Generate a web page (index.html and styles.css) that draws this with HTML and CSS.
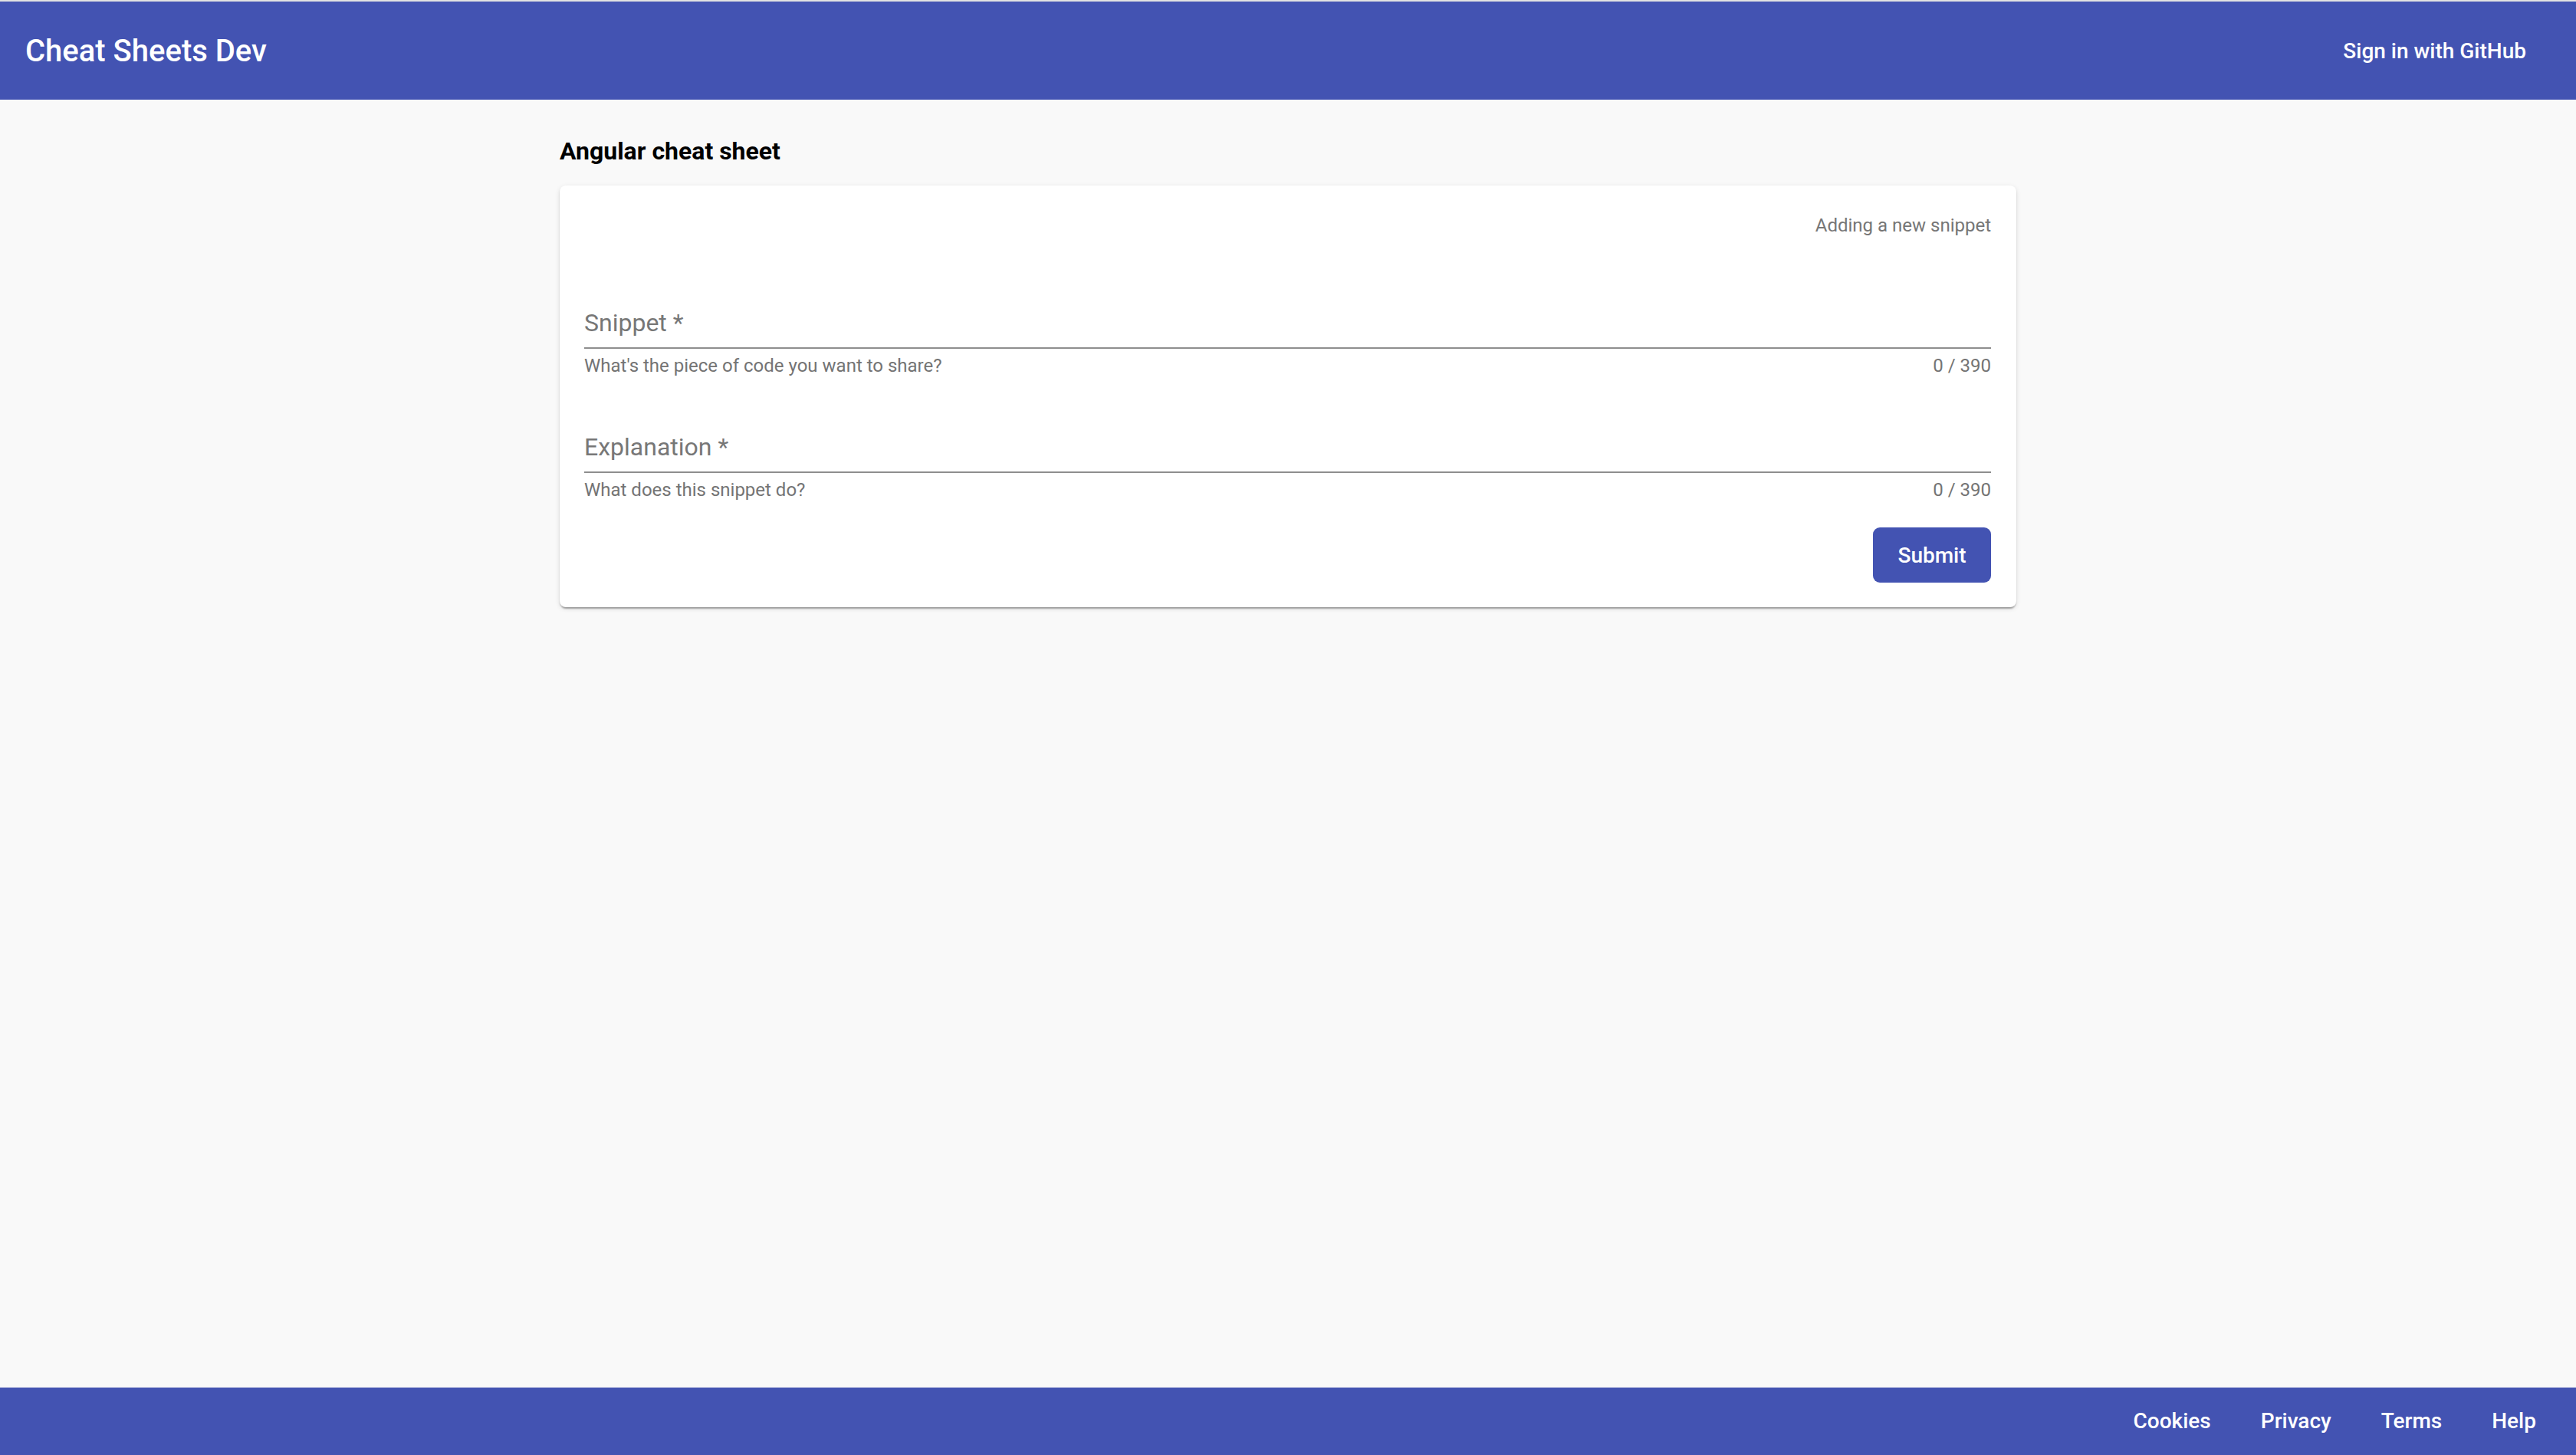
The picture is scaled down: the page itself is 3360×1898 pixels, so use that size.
FILE: index.html
```html
<!DOCTYPE html>
<html lang="en">
<head>
<meta charset="utf-8">
<title>Cheat Sheets Dev</title>
<link rel="stylesheet" href="styles.css">
</head>
<body>
<header class="toolbar">
  <a class="brand" href="#">Cheat Sheets Dev</a>
  <a class="signin" href="#">Sign in with GitHub</a>
</header>
<main class="main">
  <div class="container">
    <h1 class="page-title">Angular cheat sheet</h1>
    <form class="card">
      <div class="card-subtitle">Adding a new snippet</div>
      <div class="field field-first">
        <div class="field-input"><span class="field-label">Snippet *</span></div>
        <div class="field-hints"><span>What's the piece of code you want to share?</span><span>0 / 390</span></div>
      </div>
      <div class="field">
        <div class="field-input"><span class="field-label">Explanation *</span></div>
        <div class="field-hints"><span>What does this snippet do?</span><span>0 / 390</span></div>
      </div>
      <div class="actions">
        <button type="button" class="btn-primary">Submit</button>
      </div>
    </form>
  </div>
</main>
<footer class="footer">
  <a href="#">Cookies</a>
  <a href="#">Privacy</a>
  <a href="#">Terms</a>
  <a href="#">Help</a>
</footer>
</body>
</html>
```
FILE: styles.css
```css
* { box-sizing: border-box; }
html, body { margin: 0; padding: 0; }
body {
  min-height: 100vh;
  display: flex;
  flex-direction: column;
  border-top: 2px solid #e3e3e3;
  background: #f9f9f9;
  font-family: Roboto, "Liberation Sans", Arial, sans-serif;
  color: #000;
}
a { text-decoration: none; color: inherit; }

.toolbar {
  height: 128px;
  flex: 0 0 auto;
  background: #4353b2;
  color: #fff;
  display: flex;
  align-items: center;
  justify-content: space-between;
  padding: 0 65px 0 33px;
}
.brand { font-size: 40px; font-weight: 500; }
.signin { font-size: 28px; font-weight: 500; }

.main { flex: 1 0 auto; }
.container { width: 1900px; margin: 0 auto; padding-top: 47px; }
.page-title {
  margin: 0 0 25px;
  font-size: 32px;
  line-height: 40px;
  font-weight: 700;
}

.card {
  background: #fff;
  border-radius: 8px;
  padding: 35px 33px 32px 32px;
  box-shadow: 0 4px 2px -2px rgba(0,0,0,.2), 0 2px 2px 0 rgba(0,0,0,.14), 0 2px 6px 0 rgba(0,0,0,.12);
}
.card-subtitle {
  text-align: right;
  font-size: 24px;
  line-height: 34px;
  color: #767676;
}

.field { margin-top: 72px; }
.field-first { margin-top: 90px; }
.field-input {
  padding-bottom: 12px;
  border-bottom: 2px solid #8e8e8e;
}
.field-label {
  display: block;
  font-size: 32px;
  line-height: 40px;
  color: #777;
}
.field-hints {
  margin-top: 8px;
  display: flex;
  justify-content: space-between;
  font-size: 24px;
  line-height: 28px;
  color: #747474;
}

.actions { margin-top: 35px; display: flex; justify-content: flex-end; }
.btn-primary {
  width: 154px;
  height: 72px;
  border: 0;
  border-radius: 9px;
  background: #4353b2;
  color: #fff;
  font-family: Roboto, "Liberation Sans", Arial, sans-serif;
  font-size: 28px;
  font-weight: 500;
  cursor: pointer;
}

.footer {
  height: 88px;
  flex: 0 0 auto;
  background: #4353b2;
  color: #fff;
  display: flex;
  align-items: center;
  justify-content: flex-end;
  gap: 65px;
  padding-right: 52px;
  font-size: 28px;
  line-height: 34px;
  font-weight: 500;
}
```
